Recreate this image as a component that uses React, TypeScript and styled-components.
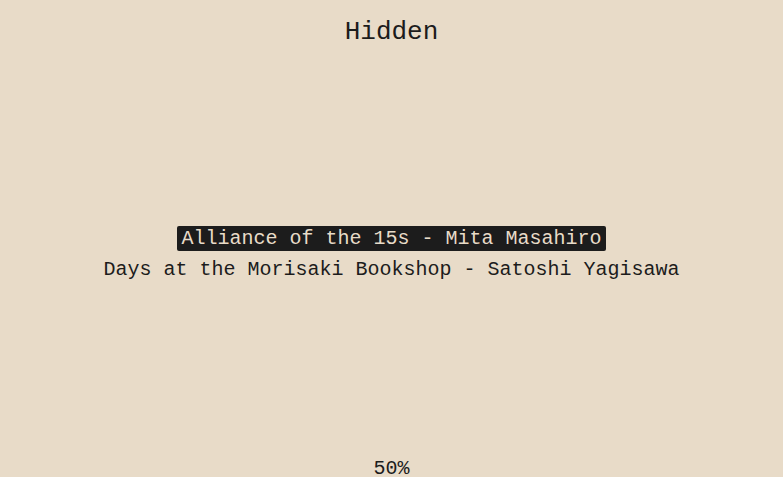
import styled, { createGlobalStyle } from "styled-components";

const GlobalStyle = createGlobalStyle`
  html, body {
    margin: 0;
    padding: 0;
    background-color: #e8dbc8;
  }
  #root {
    height: 100vh;
  }
`;

type Book = {
  title: string;
  author: string;
};

const books: Book[] = [
  { title: "Alliance of the 15s", author: "Mita Masahiro" },
  { title: "Days at the Morisaki Bookshop", author: "Satoshi Yagisawa" },
];

export default function App() {
  const selected = 0;

  return (
    <>
      <GlobalStyle />
      <Screen>
        <Title>Hidden</Title>
        <BookList>
          {books.map((book, i) => (
            <BookRow key={book.title} $active={i === selected}>
              {book.title} - {book.author}
            </BookRow>
          ))}
        </BookList>
        <Progress>50%</Progress>
      </Screen>
    </>
  );
}

const Screen = styled.div`
  display: grid;
  grid-template-rows: auto 1fr auto;
  height: 100%;
  overflow: hidden;
  font-family: "Liberation Mono", "DejaVu Sans Mono", monospace;
  color: #1c1c1c;
`;

const Title = styled.h1`
  margin: 0;
  padding-top: 15px;
  font-size: 26px;
  font-weight: normal;
  line-height: 34px;
  text-align: center;
`;

const BookList = styled.div`
  display: flex;
  flex-direction: column;
  align-items: center;
  justify-content: center;
  gap: 6px;
  padding-top: 2px;
`;

const BookRow = styled.div<{ $active: boolean }>`
  padding: 0 4px;
  font-size: 20px;
  line-height: 25px;
  border-radius: 2px;
  white-space: pre;
  background-color: ${({ $active }) => ($active ? "#1c1c1c" : "transparent")};
  color: ${({ $active }) => ($active ? "#e8dbc8" : "#1c1c1c")};
`;

const Progress = styled.div`
  height: 20px;
  font-size: 20px;
  line-height: 24px;
  text-align: center;
`;
